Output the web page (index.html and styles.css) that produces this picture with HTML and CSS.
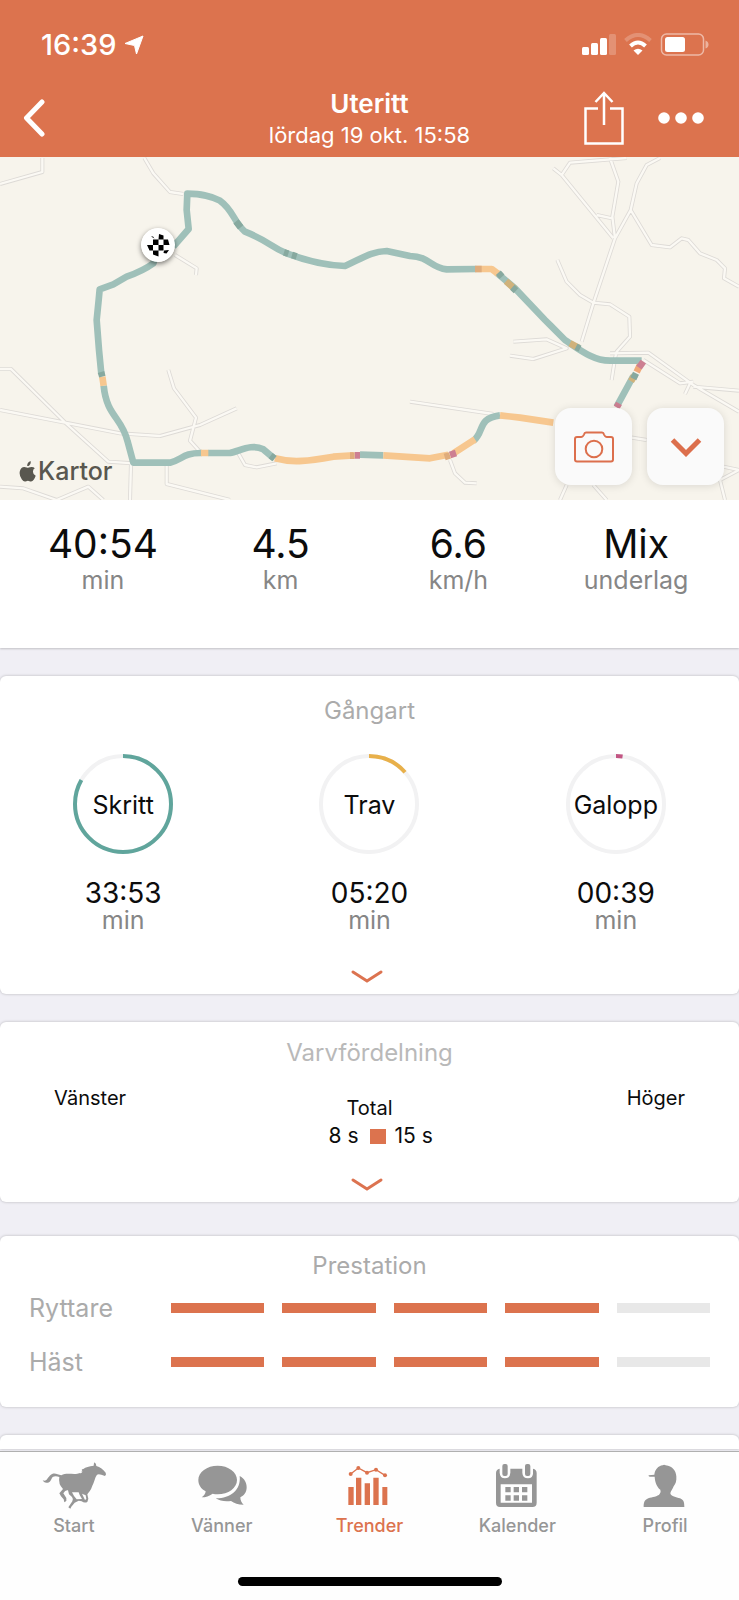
FILE: index.html
```
<!DOCTYPE html>
<html lang="sv">
<head>
<meta charset="utf-8">
<meta name="viewport" content="width=device-width, initial-scale=1">
<title>Uteritt</title>
<link rel="stylesheet" href="styles.css">
</head>
<body>
<div class="app">
  <header class="header">
    <div class="status">
      <div class="status-time">
        <span>16:39</span>
        <svg class="location-icon" viewBox="0 0 20 20" aria-hidden="true"><path d="M19 1 12.500 19 10.500 10.500 1 8.500Z" fill="#fff" stroke="#fff" stroke-linejoin="round"/></svg>
      </div>
      <svg class="status-icons" viewBox="0 0 127 24" aria-hidden="true">
        <g fill="#fff">
          <rect x="0" y="14" width="7" height="8" rx="1.500"/>
          <rect x="9" y="10" width="7" height="12" rx="1.500"/>
          <rect x="18" y="5" width="7" height="17" rx="1.500"/>
          <rect x="27" y="1" width="7" height="21" rx="1.500" opacity=".22"/>
          <path d="M56 22 51.500 17.600Q56 14 60.500 17.600Z"/>
          <rect x="83" y="4" width="20" height="15" rx="2.500"/>
          <path d="M123.500 7.500Q126.500 8.500 126.500 11.500T123.500 15.500Z" opacity=".45"/>
        </g>
        <g fill="none" stroke="#fff">
          <path d="M43.500 7.500Q56 -3.500 68.500 7.500" stroke-width="4" opacity=".22"/>
          <path d="M48.500 13Q56 6 63.500 13" stroke-width="4"/>
          <rect x="79.500" y="1" width="42" height="21" rx="5" stroke-width="1.500" opacity=".5"/>
        </g>
      </svg>
    </div>
    <nav class="nav" aria-label="Pass">
      <button class="icon-button" type="button" aria-label="Tillbaka">
        <svg class="back-icon" viewBox="0 0 22 38"><path d="M19 3 3.500 19 19 35" fill="none" stroke="#fff" stroke-width="5" stroke-linecap="round" stroke-linejoin="round"/></svg>
      </button>
      <div class="nav-title">
        <h1 class="title">Uteritt</h1>
        <p class="subtitle">lördag 19 okt. 15:58</p>
      </div>
      <div class="nav-actions">
        <button class="icon-button" type="button" aria-label="Dela">
          <svg class="share-icon" viewBox="0 0 40 54"><path d="M14 17.500H1.500V52.500H38.500V17.500H26M20 34V2M11.500 11 20 2 28.500 11" fill="none" stroke="#fff" stroke-width="2.500"/></svg>
        </button>
        <button class="icon-button" type="button" aria-label="Mer">
          <svg class="more-icon" viewBox="0 0 46 12"><g fill="#fff"><circle cx="6" cy="6" r="5.800"/><circle cx="23" cy="6" r="5.800"/><circle cx="40" cy="6" r="5.800"/></g></svg>
        </button>
      </div>
    </nav>
  </header>

  <main class="content">
    <section class="map" aria-label="Karta">
      <svg class="map-canvas" viewBox="0 21 2217 1029" preserveAspectRatio="xMidYMid slice" aria-hidden="true">
        <defs>
          <g id="roads" fill="none" stroke-linejoin="round">
            <path d="M0 102 127 66V24M433 24 460 70 510 126 550 132M525 315 590 355 588 375M0 657H33L200 822 325 935 400 940M0 780 360 850 480 858 600 825 710 775M505 660 522 715 588 803 570 872 600 905M393 940 390 1050M500 945V1002L690 1050M0 1010 70 1015 170 1050 265 1010 310 1050M715 910 735 945 770 952 830 940"/>
            <path d="M1660 55 1685 75 1840 265M1685 75 1710 38 1880 24M1830 24 1855 95 1837 200 1845 265M1790 195 1837 205M1980 24 1940 45 1910 100 1892 180 1845 265 1780 460 1745 575M1892 180 1955 285 2010 292 2045 265 2065 270 2100 310 2150 330 2175 355 2172 385 2217 410M1672 330 1700 395 1740 435 1780 458 1830 463 1888 500 1890 560 1850 605 1845 625 1835 690M1540 575 1640 568 1700 595 1600 627 1530 617M1830 610 1945 608 2080 705 2217 785M1930 630 2040 700 2080 695M2080 710 2217 722M2070 700 2055 732M1230 755 1480 792M1350 930 1365 970 1395 998 1430 1000M1890 862 1940 870M2170 950 2217 960 2160 990 2175 1050M1700 1005 1680 1050M1780 1005 1820 1050"/>
          </g>
        </defs>
        <rect width="2217" height="1071" fill="#f7f4ec"/>
        <use href="#roads" stroke="#dddad6" stroke-width="12"/>
        <use href="#roads" stroke="#fbf9f4" stroke-width="7"/>
        <g fill="none" stroke-width="20" stroke-linejoin="round">
          <g stroke="#9fc0b9">
            <path d="M472 300 460 340Q430 362 380 380L340 403 299 418 296 450 290 510 297 600 304 672"/>
            <path d="M311 707C320 800 365 800 383 875L400 938 510 938C545 930 550 908 605 909"/>
            <path d="M624 909H690C720 903 755 880 790 898L822 925"/>
            <path d="M1080 914 1150 916M1420 873C1455 845 1430 805 1500 796"/>
            <path d="M1850 770 1900 678M1925 632H1830C1780 632 1740 600 1695 570 1665 540 1655 530 1635 510L1545 415 1490 368M1430 357 1340 358C1290 352 1290 320 1230 318L1160 303C1115 305 1095 320 1035 348 970 346 900 325 860 310 810 290 810 275 735 245 700 215 700 180 660 152 630 135 600 132 562 131L560 180 566 237 520 290"/>
          </g>
          <g stroke="#f7c78f">
            <path d="M307 680 311 707M603 909H625M825 925C880 940 930 932 1000 920L1060 916M1150 916 1290 925 1345 914M1360 910 1425 868M1500 796 1560 803 1660 818M1430 357H1475L1495 372"/>
          </g>
          <g stroke="#d0b27b">
            <path d="M1518 394 1545 418M1710 580 1737 594M1893 694 1904 676"/>
          </g>
          <g stroke="#87a99f">
            <path d="M303 666 307 680M708 214 722 232M852 307 865 311M876 315 890 319M812 917 824 926M1495 368 1506 380M1537 412 1548 422M1728 590 1740 596M1900 686 1908 670"/>
          </g>
          <path d="M1910 666 1920 645" stroke="#f0a877"/>
          <path d="M1064 916H1080M1350 915 1368 909M1850 772 1857 760M1917 653 1930 635" stroke="#cd7f92"/>
          <path d="M1425 357H1445M1050 917H1064M1334 921 1350 916" stroke="#dfac7c"/>
        </g>
      </svg>
      <svg class="marker" viewBox="0 0 34 34" role="img" aria-label="Mål">
        <circle cx="17" cy="17" r="17" fill="#fff"/>
        <path d="M10 8.500 13.500 10.500 12 8.500ZM18 6 22.500 7.500V11.500H17.500ZM12 11.500H17.500V17H12ZM22.500 11.500H27L28.500 17H22.500ZM17.500 17H22.500V22.500H17.500ZM6 17H12V22.500H8.500ZM12 22.500H17.500V28.500L12 26.500ZM23 22.500 28 22 25.500 25.500 22.500 25Z" fill="#000"/>
      </svg>
      <div class="map-credit">
        <svg class="apple-icon" viewBox="0 0 17 21" aria-hidden="true"><path d="M11.800.200Q12 2.800 10.500 4.200 9.500 5.200 8.200 5.100 8 2.800 9.500 1.300 10.500.300 11.800.200ZM15.800 7.300Q13.800 8.500 14 11 14.100 13.700 16.700 14.800 16 17 14.700 18.800 13.500 20.600 12.100 20.600 11.300 20.600 10.500 20.200 8.900 19.500 7.300 20.200 6.400 20.600 5.800 20.600 4.300 20.600 2.900 18.600-.200 14 .900 10 2 6.100 5.300 6 6.300 6 7.700 6.600 8.700 7 9.700 6.600 11.400 5.900 12.700 6 14.700 6 15.800 7.300Z" fill="#59574f"/></svg>
        <span>Kartor</span>
      </div>
      <div class="map-buttons">
        <button class="map-button" type="button" aria-label="Lägg till foto">
          <svg class="camera-icon" viewBox="0 0 40 32"><g fill="none" stroke="#dc6f4c" stroke-width="2"><path d="M3 6H7Q9 6 10 3.500 10.500 1.500 12 1.500H28Q29.500 1.500 30 3.500 31 6 33 6H37Q39 6 39 8V28.500Q39 30.500 37 30.500H3Q1 30.500 1 28.500V8Q1 6 3 6Z"/><circle cx="20" cy="18" r="8.300"/></g></svg>
        </button>
        <button class="map-button" type="button" aria-label="Expandera karta">
          <svg class="expand-icon" viewBox="0 0 34 20"><path d="M3.500 3 17 16.500 30.500 3" fill="none" stroke="#dc6f4c" stroke-width="5"/></svg>
        </button>
      </div>
    </section>

    <dl class="stats">
      <div class="stat"><dt class="unit">min</dt><dd class="stat-value">40:54</dd></div>
      <div class="stat"><dt class="unit">km</dt><dd class="stat-value">4.5</dd></div>
      <div class="stat"><dt class="unit">km/h</dt><dd class="stat-value">6.6</dd></div>
      <div class="stat"><dt class="unit">underlag</dt><dd class="stat-value">Mix</dd></div>
    </dl>

    <section class="card card-gait">
      <h2 class="card-title">Gångart</h2>
      <div class="gaits">
        <div class="gait">
          <div class="ring">
            <svg class="ring-chart" viewBox="0 0 100 100" aria-hidden="true"><circle class="ring-track" cx="50" cy="50" r="48"/><circle class="ring-value walk" cx="50" cy="50" r="48" pathLength="1000" stroke-dasharray="833 1000"/></svg>
            <span class="ring-label">Skritt</span>
          </div>
          <span class="gait-time">33:53</span>
          <span class="unit">min</span>
        </div>
        <div class="gait">
          <div class="ring">
            <svg class="ring-chart" viewBox="0 0 100 100" aria-hidden="true"><circle class="ring-track" cx="50" cy="50" r="48"/><circle class="ring-value trot" cx="50" cy="50" r="48" pathLength="1000" stroke-dasharray="135 1000"/></svg>
            <span class="ring-label">Trav</span>
          </div>
          <span class="gait-time">05:20</span>
          <span class="unit">min</span>
        </div>
        <div class="gait">
          <div class="ring">
            <svg class="ring-chart" viewBox="0 0 100 100" aria-hidden="true"><circle class="ring-track" cx="50" cy="50" r="48"/><circle class="ring-value canter" cx="50" cy="50" r="48" pathLength="1000" stroke-dasharray="22 1000"/></svg>
            <span class="ring-label">Galopp</span>
          </div>
          <span class="gait-time">00:39</span>
          <span class="unit">min</span>
        </div>
      </div>
      <button class="more" type="button" aria-label="Visa mer om gångart">
        <svg class="more-chevron" viewBox="0 0 32 14"><path d="M2 2 16 11 30 2" fill="none" stroke="#dc7350" stroke-width="3" stroke-linecap="round"/></svg>
      </button>
    </section>

    <section class="card card-laps">
      <h2 class="card-title faint">Varvfördelning</h2>
      <div class="laps">
        <span class="lap-side">Vänster</span>
        <div class="lap-total">
          <span class="lap-heading">Total</span>
          <span class="lap-left">8 s</span>
          <span class="lap-right"><i class="lap-bar"></i>15 s</span>
        </div>
        <span class="lap-side end">Höger</span>
      </div>
      <button class="more" type="button" aria-label="Visa mer om varv">
        <svg class="more-chevron" viewBox="0 0 32 14"><path d="M2 2 16 11 30 2" fill="none" stroke="#dc7350" stroke-width="3" stroke-linecap="round"/></svg>
      </button>
    </section>

    <section class="card card-score">
      <h2 class="card-title">Prestation</h2>
      <div class="scores">
        <div class="score">
          <span class="score-label">Ryttare</span>
          <div class="score-bars" role="img" aria-label="4 av 5"><i class="on"></i><i class="on"></i><i class="on"></i><i class="on"></i><i></i></div>
        </div>
        <div class="score">
          <span class="score-label">Häst</span>
          <div class="score-bars" role="img" aria-label="4 av 5"><i class="on"></i><i class="on"></i><i class="on"></i><i class="on"></i><i></i></div>
        </div>
      </div>
    </section>

    <section class="card card-next"></section>
  </main>

  <footer class="tabbar">
    <nav class="tabs" aria-label="Flikar">
      <a class="tab" href="#start">
        <svg class="tab-icon" viewBox="120 63 204 144" aria-hidden="true"><path d="M128 121C142 128 143 106 158 101 168 99 174 104 184 106 198 97 218 104 232 101 240 98 243 100 247 98 242 97 244 94 248 94 244 90 244 87 250 87 257 81 267 79 281 77Q281 70 284 67 289 72 289 78C300 80 310 90 317 98Q320 104 315 108L304 104Q295 102 291 104C284 114 283 126 277 137 273 150 266 157 262 163L265 176 262 186Q253 190 245 184L236 182 224 188 214 200 211 206 205 202 210 194 217 184Q221 177 216 171L207 163 204 151Q196 149 190 160L199 174V183L193 187 191 178 183 169 178 160 189 147Q174 132 178 111 166 106 158 111C152 119 152 127 143 128 135 130 130 125 128 121ZM216 157 222 168 230 178 246 177 239 165 236 157ZM246 161 255 180 259 177 257 166Z" fill="currentColor" fill-rule="evenodd"/></svg>
        <span>Start</span>
      </a>
      <a class="tab" href="#vanner">
        <svg class="tab-icon" viewBox="563 63 204 144" aria-hidden="true"><path d="M652 77C684 77 710 96 710 120S684 163 652 163Q644 163 637 161 622 172 604 172 615 165 616 154C602 146 594 135 594 120 594 96 620 77 652 77ZM718 108C733 116 739 128 739 142 739 157 731 167 720 172 720 182 724 189 730 194 713 194 702 190 692 183 673 186 658 182 646 175 688 176 723 151 718 108Z" fill="currentColor"/></svg>
        <span>Vänner</span>
      </a>
      <a class="tab active" href="#trender" aria-current="page">
        <svg class="tab-icon" viewBox="1007 63 204 144" aria-hidden="true"><g fill="currentColor"><path d="M1047 141H1063V195H1047ZM1070 113H1086V195H1070ZM1096 130H1112V195H1096ZM1122 113H1138V195H1122ZM1149 141H1164V195H1149Z"/><circle cx="1054" cy="102" r="6"/><circle cx="1077" cy="84" r="6"/><circle cx="1103" cy="98" r="6"/><circle cx="1130" cy="89" r="6"/><circle cx="1157" cy="106" r="6"/></g><path d="M1054 102 1077 84 1103 98 1130 89 1157 106" fill="none" stroke="currentColor" stroke-width="4"/></svg>
        <span>Trender</span>
      </a>
      <a class="tab" href="#kalender">
        <svg class="tab-icon" viewBox="340 63 204 144" aria-hidden="true"><path d="M390 86V98Q391 115 406 115T422 98V86H458V98Q459 115 475 115T490 98V86Q501 88 501 99V188Q501 201 488 201H391Q379 201 379 188V99Q379 88 390 86ZM393 133V188H487V133Z" fill="currentColor" fill-rule="evenodd"/><g fill="currentColor"><rect x="398" y="72" width="16" height="36" rx="6"/><rect x="466" y="72" width="16" height="36" rx="6"/><path d="M407 141H423V157H407ZM432 141H448V157H432ZM457 141H473V157H457ZM407 166H423V182H407ZM432 166H448V182H432ZM457 166H473V182H457Z"/></g></svg>
        <span>Kalender</span>
      </a>
      <a class="tab" href="#profil">
        <svg class="tab-icon" viewBox="783 63 204 144" aria-hidden="true"><path d="M853 104C855 88 865 78 878 76Q882 72 887 76C907 78 918 92 919 109 920 123 917 132 911 139 907 149 902 154 901 160 903 170 919 172 930 175 942 180 943 188 943 201H821C821 188 823 180 835 175 847 171 863 170 869 162Q874 158 871 149C860 141 855 126 854 110H839Q834 108 836 106Z" fill="currentColor"/></svg>
        <span>Profil</span>
      </a>
    </nav>
    <div class="home-bar"></div>
  </footer>
</div>
</body>
</html>
```
FILE: styles.css
```
:root {
  --orange: #dc734e;
  --gap-bg: #f0eff5;
  --muted: #868686;
  --label: #ababab;
}

* { box-sizing: border-box; }

body {
  margin: 0;
  background: var(--gap-bg);
  color: #0c0c0c;
  font-family: Inter, "Liberation Sans", sans-serif;
}

h1, h2, p, dl, dd { margin: 0; font-weight: 400; }

button {
  padding: 0;
  border: 0;
  background: none;
  font: inherit;
  cursor: pointer;
}

svg { display: block; }

.app {
  display: flex;
  flex-direction: column;
  min-height: 100vh;
}

/* Header */
.header { background: var(--orange); color: #fff; }

.status {
  display: flex;
  justify-content: space-between;
  align-items: center;
  padding: 27px 30px 24px 41px;
}

.status-time {
  display: flex;
  align-items: center;
  gap: 7px;
  font-size: 29px;
  font-weight: 500;
  line-height: 36px;
}

.location-icon { width: 20px; height: 20px; }
.status-icons { width: 127px; height: 24px; }

.nav {
  display: grid;
  grid-template-columns: 1fr auto 1fr;
  align-items: center;
  padding: 0 35px 8px 23px;
}

.nav-title { padding-left: 12px; text-align: center; }
.title { font-size: 26px; font-weight: 600; line-height: 34px; }
.subtitle { font-size: 22px; line-height: 28px; }

.nav-actions {
  display: flex;
  justify-content: flex-end;
  align-items: center;
  gap: 34px;
}

.back-icon { width: 22px; height: 38px; }
.share-icon { width: 40px; height: 54px; }
.more-icon { width: 46px; height: 12px; }

/* Map */
.map { position: relative; overflow: hidden; }
.map-canvas { width: 100%; height: 343px; }

.marker {
  position: absolute;
  top: 71px;
  left: 141px;
  width: 34px;
  height: 34px;
  border-radius: 50%;
  box-shadow: 0 2px 5px rgba(0, 0, 0, .5);
}

.map-credit {
  position: absolute;
  bottom: 13px;
  left: 19px;
  display: flex;
  align-items: center;
  gap: 2px;
  color: #59574f;
  font-size: 25px;
  font-weight: 500;
  line-height: 32px;
}

.apple-icon { width: 17px; height: 21px; }

.map-buttons {
  position: absolute;
  right: 15px;
  bottom: 15px;
  display: flex;
  gap: 15px;
}

.map-button {
  display: grid;
  place-items: center;
  width: 77px;
  height: 77px;
  border-radius: 16px;
  background: #fafafa;
  box-shadow: 0 1px 8px rgba(0, 0, 0, .12);
}

.camera-icon { width: 40px; height: 32px; }
.expand-icon { width: 34px; height: 20px; }

/* Key figures */
.stats {
  display: grid;
  grid-template-columns: repeat(4, 1fr);
  padding: 22px 14px 54px;
  background: #fff;
  box-shadow: 0 1px 2px rgba(0, 0, 0, .2);
  text-align: center;
}

.stat { display: flex; flex-direction: column-reverse; }
.stat-value { font-size: 39px; line-height: 44px; }
.unit { color: var(--muted); font-size: 25px; line-height: 28px; }

/* Cards */
.content { flex: 1; }

.card {
  margin-top: 28px;
  border-radius: 6px;
  background: #fff;
  box-shadow: 0 0 3px rgba(0, 0, 0, .25);
}

.card-title {
  color: var(--label);
  font-size: 24px;
  line-height: 30px;
  text-align: center;
}

.card-title.faint { color: #b9b9b9; }

.more {
  display: block;
  width: 100%;
  padding-right: 6px;
}

.more-chevron { width: 32px; height: 14px; margin: 0 auto; }

.card-gait { padding: 20px 0 10px; }

.gaits {
  display: grid;
  grid-template-columns: repeat(3, 1fr);
  margin: 28px 0 37px;
}

.gait {
  display: flex;
  flex-direction: column;
  align-items: center;
}

.ring {
  display: grid;
  place-items: center;
  margin-bottom: 25px;
}

.ring-chart, .ring-label { grid-area: 1 / 1; }
.ring-chart { width: 100px; height: 100px; transform: rotate(-90deg); }
.ring-label { padding-top: 1px; font-size: 25px; line-height: 30px; }
.ring-track, .ring-value { fill: none; stroke-width: 4; }
.ring-track { stroke: #f2f2f3; }
.walk { stroke: #60a59c; }
.trot { stroke: #e8b04a; }
.canter { stroke: #c25583; }
.gait-time { font-size: 28px; line-height: 28px; }
.gait .unit { line-height: 26px; }

.card-laps { padding: 16px 0 10px; }

.laps {
  display: grid;
  grid-template-columns: 1fr 2fr 1fr;
  margin: 18px 0 30px;
  padding: 0 54px;
  font-size: 20px;
  line-height: 24px;
}

.lap-side.end { text-align: right; }

.lap-total {
  display: grid;
  grid-template-columns: 1fr 1fr;
  gap: 4px 0;
  padding-top: 10px;
}

.lap-heading { grid-column: 1 / 3; text-align: center; }
.lap-left, .lap-right { font-size: 21px; }
.lap-left { padding-right: 11px; text-align: right; }
.lap-right { display: flex; align-items: center; gap: 9px; }
.lap-bar { width: 16px; height: 15px; background: var(--orange); }

.card-score { margin-top: 34px; padding: 15px 29px 30px; }

.scores {
  display: grid;
  gap: 24px;
  margin-top: 12px;
}

.score {
  display: grid;
  grid-template-columns: 142px 1fr;
  align-items: center;
}

.score-label { color: var(--label); font-size: 25px; line-height: 30px; }

.score-bars {
  display: grid;
  grid-template-columns: repeat(5, 1fr);
  gap: 18px;
}

.score-bars i { height: 10px; background: #e8e8e8; }
.score-bars .on { background: var(--orange); }

.card-next { height: 14px; border-radius: 6px 6px 0 0; }

/* Tab bar */
.tabbar {
  position: sticky;
  bottom: 0;
  padding: 9px 0 14px;
  border-top: 1px solid #b0b0b0;
  background: #fefefe;
}

.tabs {
  display: grid;
  grid-template-columns: repeat(5, 1fr);
}

.tab {
  display: grid;
  justify-items: center;
  gap: 6px;
  color: #969696;
  font-size: 18px;
  font-weight: 500;
  line-height: 22px;
  text-decoration: none;
}

.tab.active { color: var(--orange); }
.tab-icon { width: 68px; height: 48px; }

.home-bar {
  width: 264px;
  height: 9px;
  margin: 40px auto 0;
  border-radius: 5px;
  background: #000;
}
```
